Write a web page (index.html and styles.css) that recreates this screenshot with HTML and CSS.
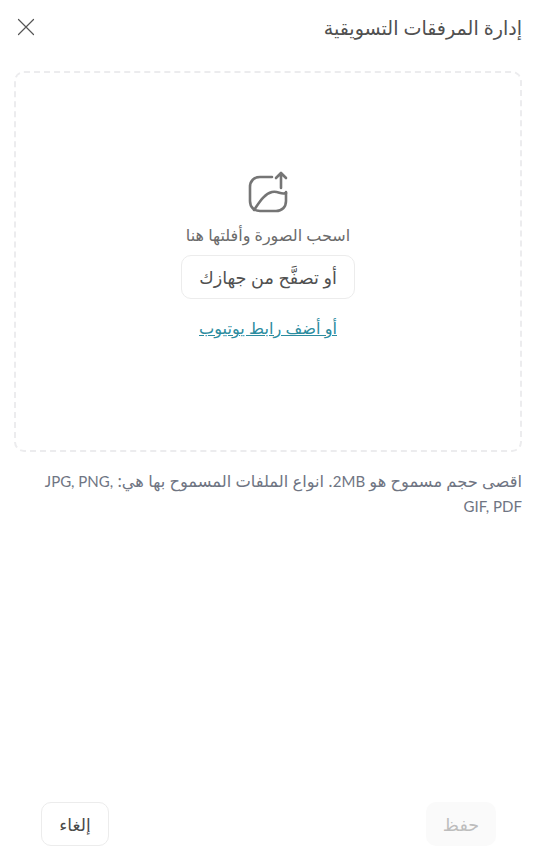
FILE: index.html
```html
<!DOCTYPE html>
<html lang="ar" dir="rtl">
<head>
<meta charset="utf-8">
<title>إدارة المرفقات التسويقية</title>
<link rel="stylesheet" href="styles.css">
</head>
<body>
<div class="page">
  <header class="head">
    <h1 class="title">إدارة المرفقات التسويقية</h1>
    <button class="close" aria-label="إغلاق">
      <svg width="18" height="18" viewBox="0 0 18 18" fill="none" stroke="#555" stroke-width="1.2" stroke-linecap="round"><path d="M1.500 1.500 16.500 16.500M16.500 1.500 1.500 16.500"/></svg>
    </button>
  </header>
  <section class="drop">
    <svg class="upload" width="40" height="42" viewBox="0 0 40 42" fill="none" stroke="#757575" stroke-width="2.6" stroke-linecap="round" stroke-linejoin="round">
      <path d="M24 6H12C6 6 2 10 2 16V30C2 36 6 40 12 40H28C34 40 38 36 38 30V21"/>
      <path d="M6 39C11 32 16 23 24 21C30 19.500 33 24 38 22"/>
      <path d="M33 17V2M28 7 33 2 38 7"/>
    </svg>
    <p class="hint">اسحب الصورة وأفلتها هنا</p>
    <button class="browse">أو تصفَّح من جهازك</button>
    <a class="yt" href="#">أو أضف رابط يوتيوب</a>
  </section>
  <p class="note">اقصى حجم مسموح هو <span class="latin">2MB</span>. انواع الملفات المسموح بها هي: <span class="latin">JPG, PNG, GIF, PDF</span></p>
  <footer class="foot">
    <button class="save">حفظ</button>
    <button class="cancel">إلغاء</button>
  </footer>
</div>
</body>
</html>
```
FILE: styles.css
```css
* { box-sizing: border-box; }
html, body { margin: 0; height: 100%; background: #fff; }
body { font-family: "Noto Sans", "DejaVu Sans", sans-serif; }
button { font-family: inherit; cursor: pointer; }
.page { height: 868px; display: flex; flex-direction: column; padding: 0 12px 22px 14px; }
.head { height: 71px; display: flex; align-items: flex-start; justify-content: space-between; padding-top: 15px; }
.title { margin: 0; font-size: 19.100px; line-height: 26px; font-weight: 400; color: #505050; }
.close { border: 0; background: none; padding: 0; margin: 3px 0 0 0; width: 24px; height: 18px; display: flex; justify-content: center; }
.drop { height: 381px; width: 508px; border: 2px dashed #ececee; border-radius: 10px; display: flex; flex-direction: column; align-items: center; padding-top: 98px; }
.upload { display: block; }
.hint { margin: 12px 0 0; font-size: 16px; line-height: 20px; color: #6b6b6b; }
.browse { margin-top: 10px; width: 174px; height: 44px; border: 1px solid #ececec; border-radius: 10px; background: #fff; font-size: 17.600px; color: #505050; }
.yt { margin-top: 17px; font-size: 16.200px; line-height: 24px; color: #2c8c9f; text-decoration: underline; }
.note { margin: 17px 0 0; padding-left: 20px; font-size: 16.300px; line-height: 25px; color: #6f7583; width: 508px; }
.latin { font-family: Lato, sans-serif; font-size: 15px; }
.foot { margin-top: auto; display: flex; justify-content: space-between; padding: 0 26px 0 27px; }
.save { width: 70px; height: 44px; border: 0; border-radius: 10px; background: #fafafa; font-size: 17.500px; color: #bdbdbd; }
.cancel { width: 68px; height: 44px; border: 1px solid #ececec; border-radius: 10px; background: #fff; font-size: 17px; font-weight: 500; color: #4a4a4a; }
```
